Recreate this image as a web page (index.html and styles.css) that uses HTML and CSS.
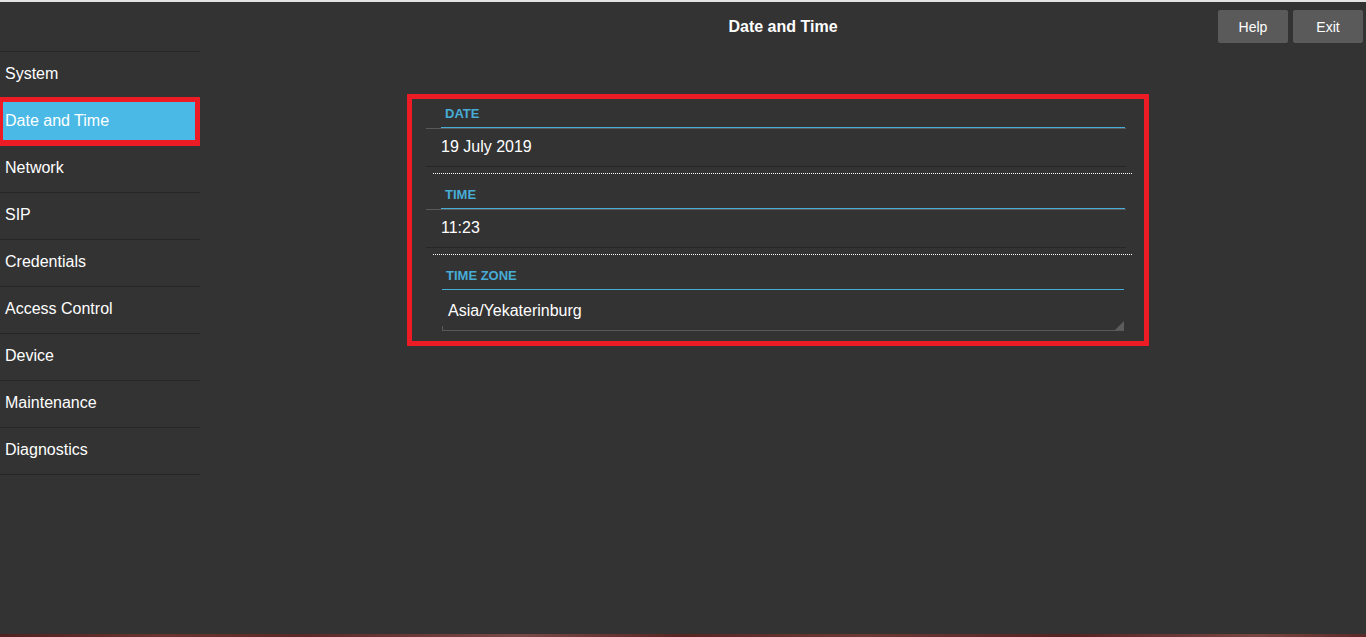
FILE: index.html
```html
<!DOCTYPE html>
<html lang="en">

<head>
    <meta charset="UTF-8">
    <meta name="viewport" content="width=device-width, initial-scale=1.0">
    <title>Date and Time</title>
    <link rel="stylesheet" href="styles.css">
</head>

<body>

    <div class="app">
        <header class="topbar">
            <div class="topbar-spacer"></div>
            <div class="topbar-main">
                <div></div>
                <h1 class="page-title">Date and Time</h1>
                <div class="topbar-actions">
                    <button class="btn">Help</button>
                    <button class="btn">Exit</button>
                </div>
            </div>
        </header>

        <div class="layout">
            <nav class="sidebar">
                <ul class="menu">
                    <li><a href="#">System</a></li>
                    <li class="active"><a href="#">Date and Time</a></li>
                    <li><a href="#">Network</a></li>
                    <li><a href="#">SIP</a></li>
                    <li><a href="#">Credentials</a></li>
                    <li><a href="#">Access Control</a></li>
                    <li><a href="#">Device</a></li>
                    <li><a href="#">Maintenance</a></li>
                    <li><a href="#">Diagnostics</a></li>
                </ul>
            </nav>

            <main class="content">
                <div class="panel">
                    <div class="field">
                        <div class="field-head"><span class="field-title">Date</span></div>
                        <div class="field-value">19 July 2019</div>
                    </div>
                    <div class="divider"></div>

                    <div class="field">
                        <div class="field-head"><span class="field-title">Time</span></div>
                        <div class="field-value">11:23</div>
                    </div>
                    <div class="divider"></div>

                    <div class="zone">
                        <div class="zone-title">Time Zone</div>
                        <div class="zone-select">Asia/Yekaterinburg</div>
                    </div>
                </div>
            </main>
        </div>

        <div class="wallpaper"></div>
    </div>

</body>

</html>
```

FILE: styles.css
```css
:root {
    --bg-color: #333333;
    --line-color: #262626;
    --accent-color: #4ab9e5;
    --label-color: #47acd6;
    --mark-color: #ed1c24;
    --text-color: #ffffff;
    --button-color: #5a5a5a;
}

html,
body {
    margin: 0;
    height: 100%;
}

body {
    font-family: "Liberation Sans", Arial, sans-serif;
    background-color: var(--bg-color);
    color: var(--text-color);
    overflow: hidden;
}

.app {
    height: 637px;
    display: flex;
    flex-direction: column;
    border-top: 2px solid #e4e4e4;
    box-sizing: border-box;
}

/* header */

.topbar {
    display: flex;
    height: 49px;
    flex-shrink: 0;
}

.topbar-spacer {
    width: 200px;
}

.topbar-main {
    flex: 1;
    display: grid;
    grid-template-columns: 1fr auto 1fr;
    align-items: start;
}

.page-title {
    margin: 15px 0 0;
    font-size: 16px;
    line-height: 20px;
    font-weight: bold;
}

.topbar-actions {
    display: flex;
    justify-content: flex-end;
    gap: 5px;
    margin-top: 8px;
    padding-right: 3px;
}

.btn {
    width: 70px;
    height: 33px;
    border: none;
    border-radius: 2px;
    background-color: var(--button-color);
    color: var(--text-color);
    font-family: inherit;
    font-size: 14px;
    cursor: pointer;
}

/* sidebar */

.layout {
    flex: 1;
    display: flex;
}

.sidebar {
    width: 200px;
    flex-shrink: 0;
}

.menu {
    list-style: none;
    margin: 0;
    padding: 0;
    border-top: 1px solid var(--line-color);
}

.menu li {
    position: relative;
    border-bottom: 1px solid var(--line-color);
}

.menu a {
    display: block;
    height: 46px;
    line-height: 43px;
    padding-left: 5px;
    font-size: 16px;
    color: var(--text-color);
    text-decoration: none;
}

.menu li.active a {
    position: relative;
    z-index: 1;
}

/* highlighted item with its red marker frame */
.menu li.active::before {
    content: "";
    position: absolute;
    left: 0;
    top: -2px;
    width: 192px;
    height: 38px;
    background-color: var(--accent-color);
    border-style: solid;
    border-color: var(--mark-color);
    border-width: 5px 5px 6px 3px;
}

/* main panel */

.content {
    flex: 1;
    padding: 43px 0 0 207px;
}

.panel {
    width: 742px;
    box-sizing: border-box;
    border: 5px solid var(--mark-color);
    padding-bottom: 10px;
}

.field {
    margin: 0 18px 0 14px;
}

.field-head {
    padding: 8px 0 0 15px;
    border-bottom: 1px solid #595959;
}

.field-title {
    display: block;
    padding: 0 0 6px 4px;
    border-bottom: 1px solid var(--label-color);
    margin-right: 1px;
    font-size: 13px;
    line-height: 14px;
    font-weight: bold;
    text-transform: uppercase;
    color: var(--label-color);
}

.field-value {
    height: 37px;
    line-height: 36px;
    padding-left: 15px;
    font-size: 16px;
    border-bottom: 1px solid var(--line-color);
}

.divider {
    margin: 6px 12px 6px 21px;
    border-top: 1px dotted #ffffff;
}

.zone {
    margin: 2px 20px 0 30px;
}

.zone-title {
    padding: 8px 0 6px 4px;
    border-bottom: 1px solid var(--label-color);
    font-size: 13px;
    line-height: 14px;
    font-weight: bold;
    text-transform: uppercase;
    color: var(--label-color);
}

.zone-select {
    position: relative;
    height: 40px;
    line-height: 41px;
    padding-left: 6px;
    font-size: 16px;
    border-bottom: 1px solid #595959;
}

/* short left edge of the select box */
.zone-select::before {
    content: "";
    position: absolute;
    left: 0;
    bottom: 0;
    width: 1px;
    height: 4px;
    background-color: #595959;
}

/* resize grip */
.zone-select::after {
    content: "";
    position: absolute;
    right: 0;
    bottom: 0;
    border-style: solid;
    border-width: 0 0 9px 9px;
    border-color: transparent transparent #5c5c5c transparent;
}

.wallpaper {
    height: 3px;
    flex-shrink: 0;
    background: linear-gradient(90deg, #4e2220 0%, #6b3331 12%, #5a2826 22%, #7a4a48 38%, #562522 50%, #6d3937 63%, #532321 78%, #7a4644 92%, #5a2826 100%);
}
```
